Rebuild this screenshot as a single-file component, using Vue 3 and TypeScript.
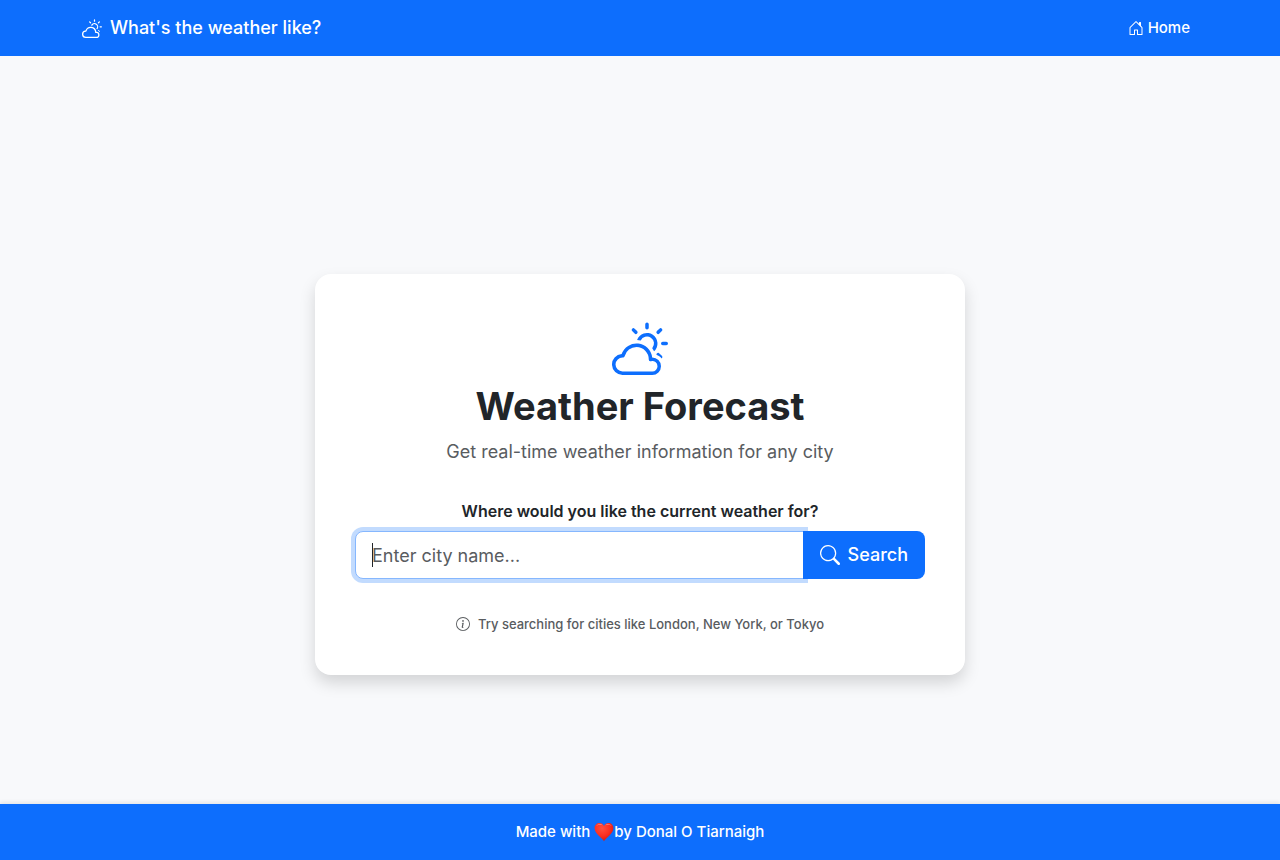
<script setup lang="ts">
import { onMounted, ref } from 'vue'

const city = ref<string>('')
const focused = ref<boolean>(false)
const cityInput = ref<HTMLInputElement | null>(null)

onMounted(() => cityInput.value?.focus())
</script>

<template>
  <div class="page">
    <header class="navbar">
      <nav class="container">
        <a class="brand" href="#">
          <svg class="brand-icon" viewBox="0 0 16 16" fill="currentColor" aria-hidden="true">
            <path d="M7 8a3.5 3.5 0 0 1 3.5 3.555.5.5 0 0 0 .624.492A1.503 1.503 0 0 1 13 13.5a1.5 1.5 0 0 1-1.5 1.5H3a2 2 0 1 1 .1-3.998.5.5 0 0 0 .51-.375A3.5 3.5 0 0 1 7 8m4.473 3a4.5 4.5 0 0 0-8.72-.99A3 3 0 0 0 3 16h8.5a2.5 2.5 0 0 0 0-5z" />
            <path d="M10.5 1.5a.5.5 0 0 0-1 0v1a.5.5 0 0 0 1 0zm3.743 1.964a.5.5 0 1 0-.707-.707l-.708.707a.5.5 0 0 0 .708.708zm-7.779-.707a.5.5 0 0 0-.707.707l.707.708a.5.5 0 1 0 .708-.708zm1.734 3.374a2 2 0 1 1 3.296 2.198q.3.423.516.898a3 3 0 1 0-4.84-3.225q.529.017 1.028.129m4.484 4.074c.6.215 1.125.59 1.522 1.072a.5.5 0 0 0 .039-.742l-.707-.707a.5.5 0 0 0-.854.377M14.5 6.5a.5.5 0 0 0 0 1h1a.5.5 0 0 0 0-1z" />
          </svg>
          <span>What's the weather like?</span>
        </a>
        <a class="nav-link" href="#">
          <svg class="nav-icon" viewBox="0 0 16 16" fill="currentColor" aria-hidden="true">
            <path d="M8.354 1.146a.5.5 0 0 0-.708 0l-6 6A.5.5 0 0 0 1.5 7.5v7a.5.5 0 0 0 .5.5h4.5a.5.5 0 0 0 .5-.5v-4h2v4a.5.5 0 0 0 .5.5H14a.5.5 0 0 0 .5-.5v-7a.5.5 0 0 0-.146-.354L13 5.793V2.5a.5.5 0 0 0-.5-.5h-1a.5.5 0 0 0-.5.5v1.293zM2.5 14V7.707l5.5-5.5 5.5 5.5V14H10v-4a.5.5 0 0 0-.5-.5h-3a.5.5 0 0 0-.5.5v4z" />
          </svg>
          <span>Home</span>
        </a>
      </nav>
    </header>

    <main class="main">
      <section class="card">
        <svg class="hero-icon" viewBox="0 0 16 16" fill="currentColor" aria-hidden="true">
          <path d="M7 8a3.5 3.5 0 0 1 3.5 3.555.5.5 0 0 0 .624.492A1.503 1.503 0 0 1 13 13.5a1.5 1.5 0 0 1-1.5 1.5H3a2 2 0 1 1 .1-3.998.5.5 0 0 0 .51-.375A3.5 3.5 0 0 1 7 8m4.473 3a4.5 4.5 0 0 0-8.72-.99A3 3 0 0 0 3 16h8.5a2.5 2.5 0 0 0 0-5z" />
          <path d="M10.5 1.5a.5.5 0 0 0-1 0v1a.5.5 0 0 0 1 0zm3.743 1.964a.5.5 0 1 0-.707-.707l-.708.707a.5.5 0 0 0 .708.708zm-7.779-.707a.5.5 0 0 0-.707.707l.707.708a.5.5 0 1 0 .708-.708zm1.734 3.374a2 2 0 1 1 3.296 2.198q.3.423.516.898a3 3 0 1 0-4.84-3.225q.529.017 1.028.129m4.484 4.074c.6.215 1.125.59 1.522 1.072a.5.5 0 0 0 .039-.742l-.707-.707a.5.5 0 0 0-.854.377M14.5 6.5a.5.5 0 0 0 0 1h1a.5.5 0 0 0 0-1z" />
        </svg>
        <h1 class="title">Weather Forecast</h1>
        <p class="lead">Get real-time weather information for any city</p>

        <form class="form" @submit.prevent>
          <label class="label" for="city">Where would you like the current weather for?</label>
          <div class="input-group">
            <div class="field">
              <input
                id="city"
                ref="cityInput"
                v-model="city"
                class="city-input"
                :class="{ empty: !city }"
                type="text"
                placeholder="Enter city name..."
                autocomplete="off"
                @focus="focused = true"
                @blur="focused = false"
              />
              <span v-if="focused && !city" class="caret" aria-hidden="true"></span>
            </div>
            <button class="search-button" type="submit">
              <svg class="search-icon" viewBox="0 0 16 16" fill="currentColor" aria-hidden="true">
                <path d="M11.742 10.344a6.5 6.5 0 1 0-1.397 1.398h-.001q.044.06.098.115l3.85 3.85a1 1 0 0 0 1.415-1.414l-3.85-3.85a1 1 0 0 0-.115-.1zM12 6.5a5.5 5.5 0 1 1-11 0 5.5 5.5 0 0 1 11 0" />
              </svg>
              <span>Search</span>
            </button>
          </div>
        </form>

        <p class="hint">
          <svg class="hint-icon" viewBox="0 0 16 16" fill="currentColor" aria-hidden="true">
            <path d="M8 15A7 7 0 1 1 8 1a7 7 0 0 1 0 14m0 1A8 8 0 1 0 8 0a8 8 0 0 0 0 16" />
            <path d="m8.93 6.588-2.29.287-.082.38.45.083c.294.07.352.176.288.469l-.738 3.468c-.194.897.105 1.319.808 1.319.545 0 1.178-.252 1.465-.598l.088-.416c-.2.176-.492.246-.686.246-.275 0-.375-.193-.304-.533zM9 4.5a1 1 0 1 1-2 0 1 1 0 0 1 2 0" />
          </svg>
          <span>Try searching for cities like London, New York, or Tokyo</span>
        </p>
      </section>
    </main>

    <footer class="footer">
      <span>Made with</span>
      <svg class="heart" viewBox="0 0 20 20" role="img" aria-label="love">
        <defs>
          <radialGradient id="heart-fill" cx="0.4" cy="0.3" r="0.75">
            <stop offset="0" stop-color="#ff5040" />
            <stop offset="0.55" stop-color="#fc2f22" />
            <stop offset="1" stop-color="#cf160e" />
          </radialGradient>
        </defs>
        <path fill="url(#heart-fill)" d="M10 19.2C8.600 16.200.6 12.200.6 6.100.6 2.900 2.800.9 5.400.9 7.500.9 9.200 2 10 3.900 10.800 2 12.500.9 14.600.9c2.600 0 4.800 2 4.800 5.200 0 6.100-8 10.100-9.400 13.100z" />
        <path fill="#ffb0a4" opacity=".7" d="M2.200 4.300C3 1.600 7 1 8.600 3.300 7 2.500 4 2.500 2.200 4.300zM11.400 3.300C13 1 17 1.600 17.800 4.300 16 2.500 13 2.500 11.400 3.300z" />
      </svg>
      <span>by Donal O Tiarnaigh</span>
    </footer>
  </div>
</template>

<style>
body {
  margin: 0;
  background: #f8f9fb;
}
</style>

<style scoped>
.page {
  display: flex;
  flex-direction: column;
  min-height: 100vh;
  background: #f8f9fb;
  color: #212529;
  font-family: Inter, 'Liberation Sans', sans-serif;
  font-size: 16px;
  line-height: 24px;
}

.navbar {
  background: #0d6efd;
  color: #fff;
}

.container {
  display: flex;
  align-items: center;
  justify-content: space-between;
  max-width: 1116px;
  min-height: 56px;
  margin: 0 auto;
  box-sizing: border-box;
}

.brand,
.nav-link {
  display: flex;
  align-items: center;
  color: #fff;
  font-weight: 500;
  text-decoration: none;
}

.brand {
  gap: 8px;
  font-size: 18px;
}

.brand-icon {
  width: 20px;
  height: 20px;
}

.nav-link {
  gap: 4px;
  padding: 0 8px;
  font-size: 15px;
}

.nav-icon {
  width: 16px;
  height: 16px;
}

.main {
  display: flex;
  flex: 1;
  align-items: center;
  justify-content: center;
  padding: 89px 16px 0;
}

.card {
  display: flex;
  flex-direction: column;
  align-items: center;
  width: 100%;
  max-width: 650px;
  box-sizing: border-box;
  padding: 45px 40px 40px;
  border-radius: 16px;
  background: #fff;
  box-shadow: 0 8px 16px rgba(0, 0, 0, 0.15);
  text-align: center;
}

.hero-icon {
  width: 56px;
  height: 56px;
  color: #0d6efd;
}

.title {
  margin: 7px 0 8px;
  font-size: 38px;
  font-weight: 700;
  line-height: 48px;
}

.lead {
  margin: 0 0 33px;
  color: #595c5f;
  font-size: 18px;
  line-height: 28px;
}

.form {
  width: 100%;
}

.label {
  display: block;
  margin-bottom: 8px;
  font-weight: 600;
}

.input-group {
  display: flex;
}

.field {
  position: relative;
  flex: 1;
  min-width: 0;
}

.city-input {
  display: block;
  width: 100%;
  height: 48px;
  box-sizing: border-box;
  padding: 8px 16px;
  border: 1px solid #dee2e6;
  border-radius: 8px 0 0 8px;
  outline: 0;
  background: #fff;
  color: #212529;
  font: inherit;
  font-size: 18px;
}

.city-input.empty {
  caret-color: transparent;
}

.city-input::placeholder {
  color: #595c5f;
  opacity: 1;
}

.city-input:focus {
  border-color: #86b7fe;
  box-shadow: 0 0 0 4px rgba(13, 110, 253, 0.25);
}

.caret {
  position: absolute;
  top: 12px;
  bottom: 12px;
  left: 17px;
  width: 1px;
  background: #212529;
  pointer-events: none;
}

.search-button {
  position: relative;
  display: flex;
  align-items: center;
  gap: 8px;
  height: 48px;
  margin-left: -1px;
  padding: 8px 17px;
  border: 0;
  border-radius: 0 8px 8px 0;
  background: #0d6efd;
  color: #fff;
  font: inherit;
  font-size: 18px;
  font-weight: 500;
  cursor: pointer;
}

.search-icon {
  width: 20px;
  height: 20px;
}

.hint {
  display: flex;
  align-items: center;
  gap: 8px;
  margin: 34px 0 0;
  color: #595c5f;
  font-size: 13px;
  font-weight: 500;
  line-height: 22px;
}

.hint-icon {
  width: 14px;
  height: 14px;
}

.footer {
  display: flex;
  align-items: center;
  justify-content: center;
  min-height: 56px;
  background: #0d6efd;
  box-shadow: 0 -2px 4px rgba(0, 0, 0, 0.08);
  color: #fff;
  font-size: 15px;
  font-weight: 500;
}

.heart {
  width: 20px;
  height: 20px;
  margin-left: 4px;
}
</style>
